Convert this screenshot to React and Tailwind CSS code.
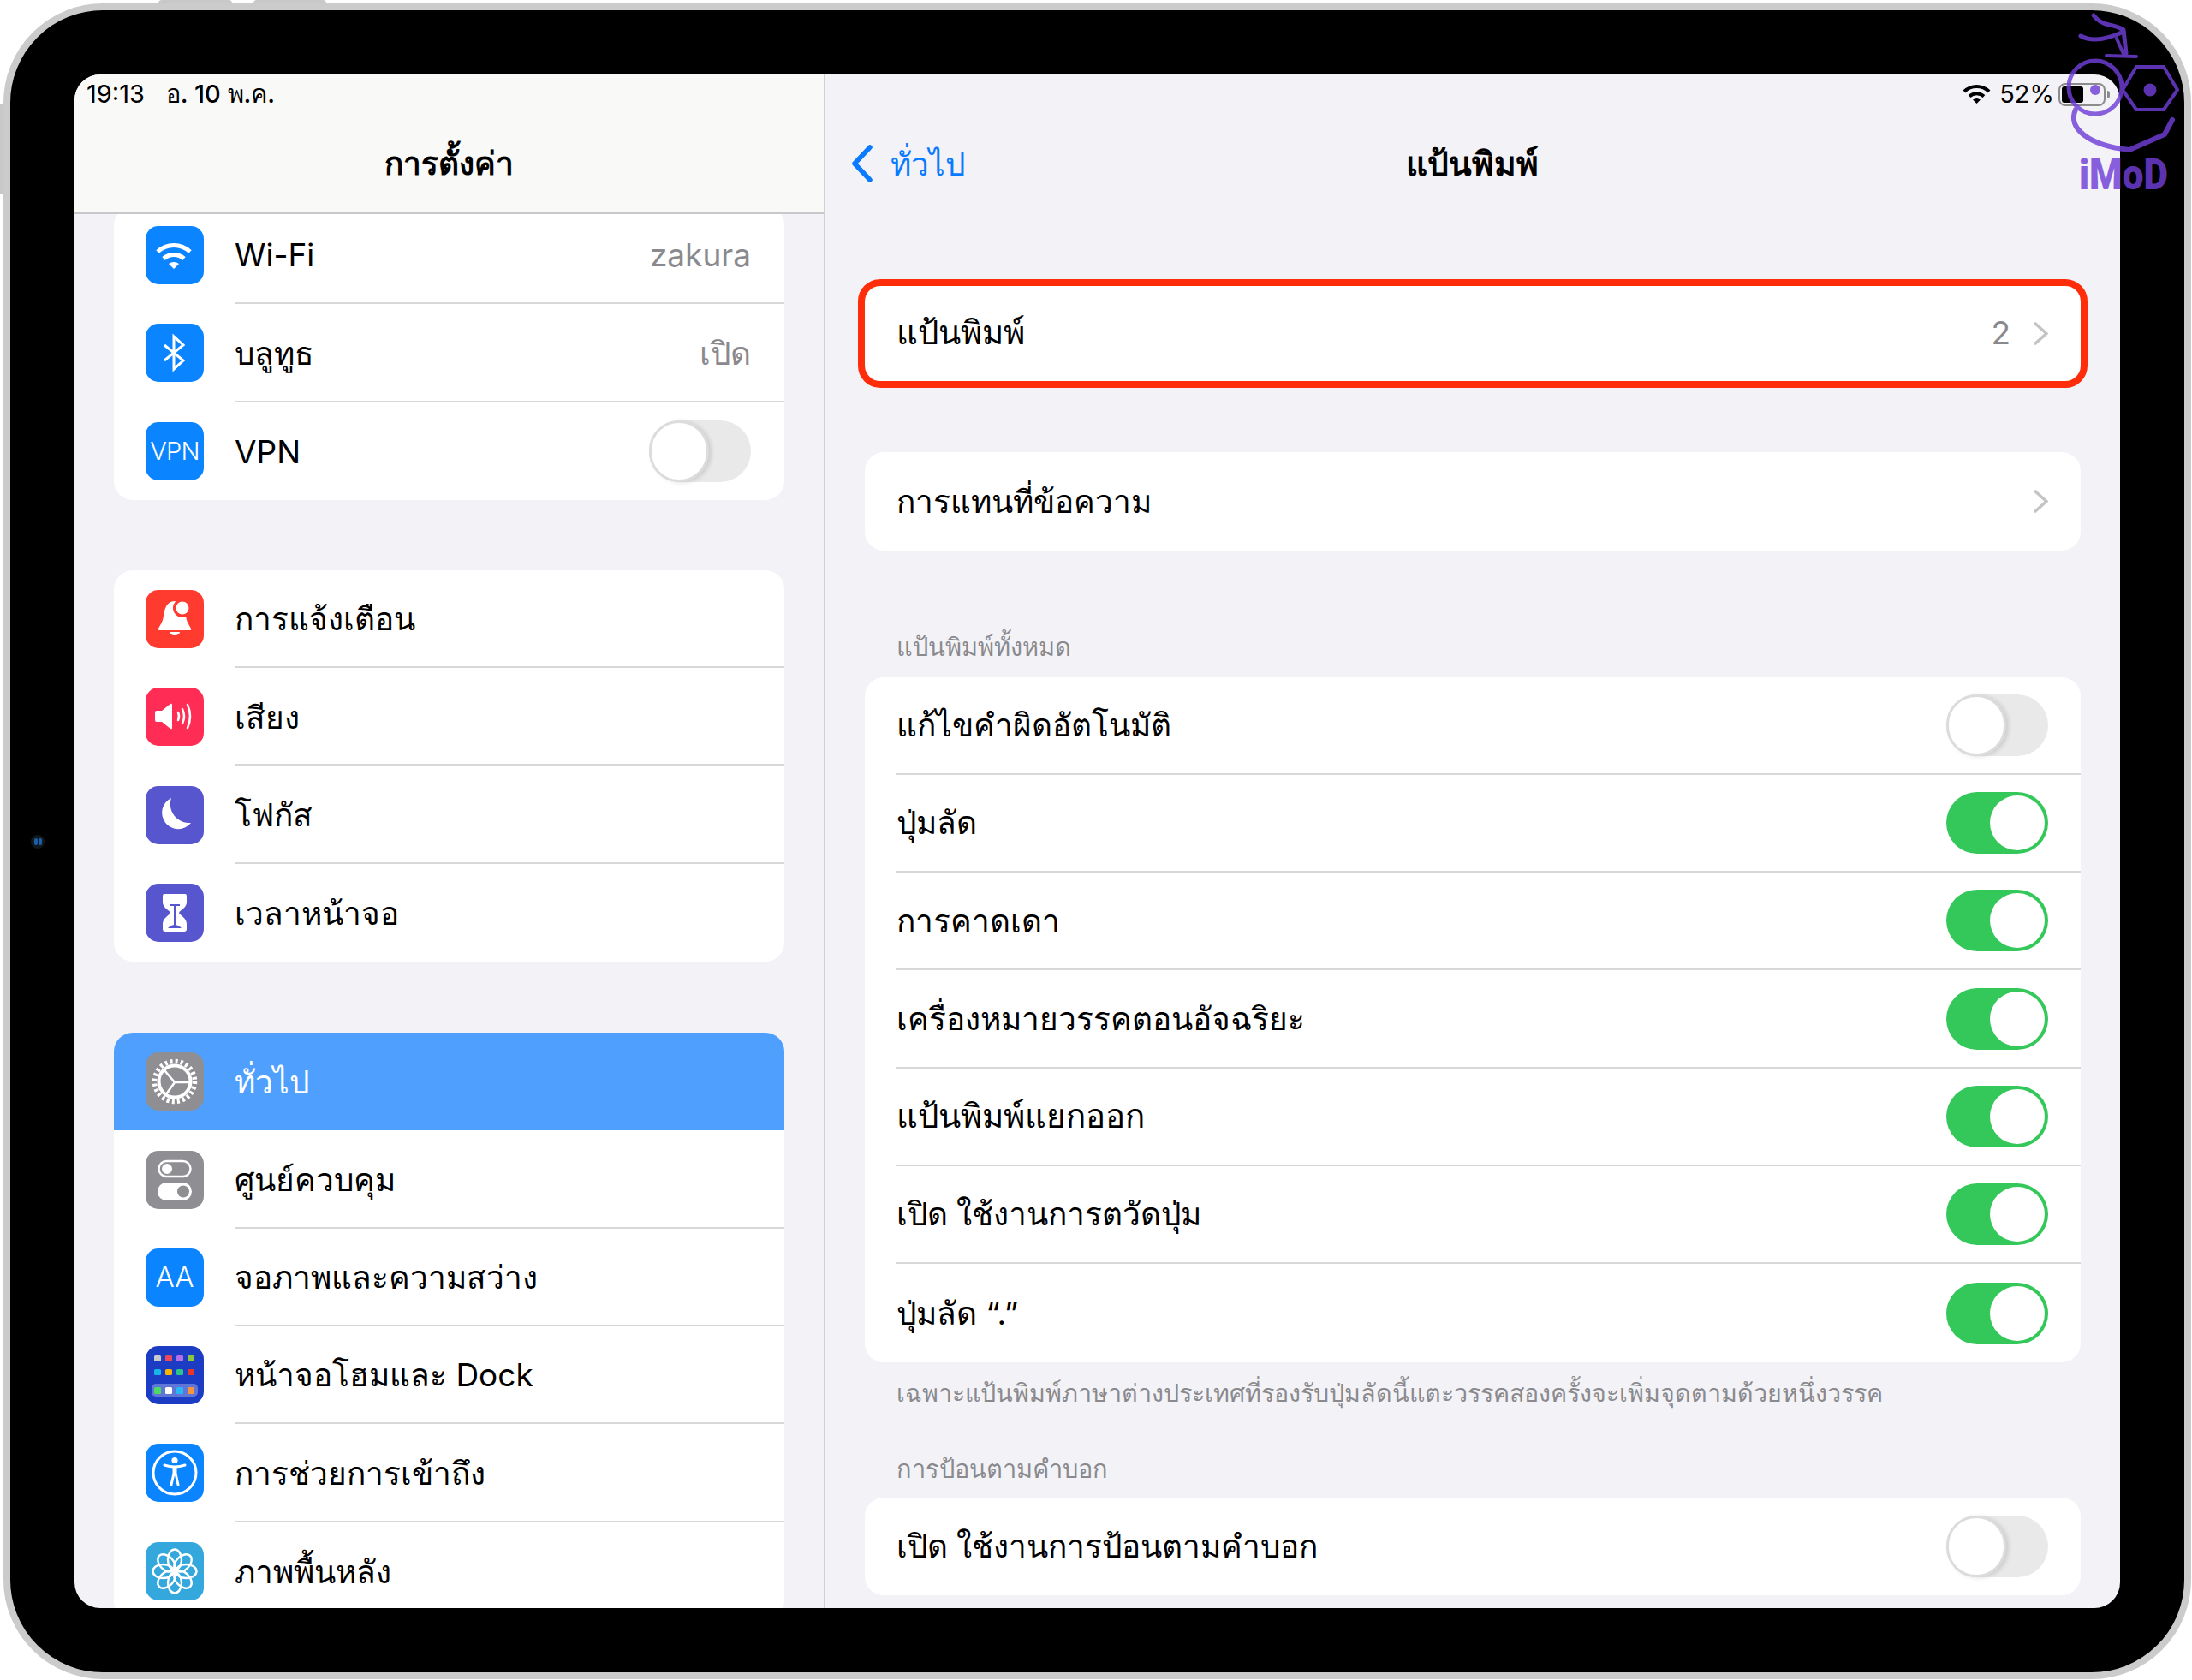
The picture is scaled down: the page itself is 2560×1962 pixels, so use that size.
import { Fragment } from "react";

function WifiTile() {
  return (
    <svg viewBox="0 0 68 68" className="h-full w-full" fill="none" stroke="white" strokeWidth="5">
      <path d="M14 30C25 20 41 20 52 30" />
      <path d="M21 38C28 32 38 32 45 38" />
      <path d="M33 50L27 44Q33 40 39 44Z" fill="white" stroke="none" />
    </svg>
  );
}

function BluetoothTile() {
  return (
    <svg viewBox="0 0 68 68" className="h-full w-full" fill="none" stroke="white" strokeWidth="3">
      <path d="M22 25L44 43L33 53V15L44 25L22 43" />
    </svg>
  );
}

function BellTile() {
  return (
    <svg viewBox="0 0 68 68" className="h-full w-full">
      <path fill="white" d="M34 13C25 13 22 22 21 30C20 38 17 41 15 45Q14 47 17 47H51Q54 47 53 45C51 41 48 38 47 30C46 22 43 13 34 13Z" />
      <path fill="white" d="M28 49H40A6 4 0 0 1 28 49Z" />
      <circle cx="43" cy="21" r="11" fill="#ff3b30" />
      <circle cx="43" cy="21" r="7.5" fill="white" />
    </svg>
  );
}

function SoundTile() {
  return (
    <svg viewBox="0 0 68 68" className="h-full w-full" fill="none" stroke="white" strokeWidth="2.5" strokeLinecap="round">
      <path fill="white" stroke="none" d="M13 27H19L29 19Q31 18 31 20V47Q31 49 29 48L19 40H13Q11 40 11 38V29Q11 27 13 27Z" />
      <path d="M38 29Q40 33.5 38 38" />
      <path d="M43 25Q47 33.5 43 42" />
      <path d="M49 20Q55 33.5 49 47" />
    </svg>
  );
}

function MoonTile() {
  return (
    <svg viewBox="0 0 68 68" className="h-full w-full">
      <path fill="white" d="M30 14A19 19 0 1 0 53 43A22 22 0 0 1 30 14Z" />
    </svg>
  );
}

function HourglassTile() {
  return (
    <svg viewBox="0 0 68 68" className="h-full w-full">
      <path fill="white" d="M22 12H46Q48 12 48 14V22C48 28 40 31 39 34C40 37 48 40 48 47V53Q48 56 45 56H23Q20 56 20 53V47C20 40 28 37 29 34C28 31 20 28 20 22V14Q20 12 22 12Z" />
      <rect x="28" y="24" width="12" height="2" fill="#5856cf" />
      <rect x="33" y="25" width="2" height="24" fill="#5856cf" />
      <path fill="#5856cf" d="M26 52Q34 44 42 52Z" />
    </svg>
  );
}

function GearTile() {
  return (
    <svg viewBox="0 0 68 68" className="h-full w-full" fill="none" stroke="white">
      <circle cx="34" cy="34" r="23.5" strokeWidth="5.5" strokeDasharray="3 3.15" />
      <circle cx="34" cy="34" r="18.5" strokeWidth="4" />
      <path d="M34 35L22 21M34 35H52M34 35L24 49" strokeWidth="2.6" />
    </svg>
  );
}

function ControlsTile() {
  return (
    <svg viewBox="0 0 68 68" className="h-full w-full">
      <rect x="15.5" y="12" width="37" height="18" rx="9" fill="none" stroke="white" strokeWidth="2.5" />
      <circle cx="25" cy="21" r="6" fill="white" />
      <rect x="14" y="37" width="40" height="21" rx="10.5" fill="white" />
      <circle cx="44" cy="47.5" r="7" fill="#8e8e93" />
    </svg>
  );
}

function HomeTile() {
  const rows = [
    { y: 11, colors: ["#c9c9cc", "#f0485b", "#b36ee8", "#8cc63f"] },
    { y: 27, colors: ["#19b5e8", "#f7b500", "#2bc48a", "#e8352b"] },
  ];
  const xs = [10, 23, 36, 49];
  return (
    <svg viewBox="0 0 68 68" className="h-full w-full">
      {rows.map((r) =>
        r.colors.map((c, i) => <rect key={c} x={xs[i]} y={r.y} width="8" height="7" rx="1.5" fill={c} />)
      )}
      <rect x="7" y="44" width="54" height="15" rx="5" fill="white" fillOpacity="0.3" />
      {["#4cd964", "#ffffff", "#29b6f6", "#f7943e"].map((c, i) => (
        <rect key={c} x={xs[i]} y="48" width="8" height="8" rx="1.5" fill={c} />
      ))}
    </svg>
  );
}

function AccessTile() {
  return (
    <svg viewBox="0 0 68 68" className="h-full w-full" fill="none" stroke="white" strokeWidth="3" strokeLinecap="round" strokeLinejoin="round">
      <circle cx="34" cy="34" r="25" />
      <circle cx="34" cy="19.5" r="3.6" fill="white" stroke="none" />
      <path d="M22 25Q34 29 46 25" />
      <path d="M34 27V37" strokeWidth="5" strokeLinecap="butt" />
      <path d="M32.5 37L30 48M35.5 37L38 48" />
    </svg>
  );
}

function FlowerTile() {
  const angles = [0, 45, 90, 135, 180, 225, 270, 315];
  return (
    <svg viewBox="0 0 68 68" className="h-full w-full" fill="none" stroke="white" strokeWidth="2.4">
      {angles.map((a) => (
        <ellipse key={a} cx="34" cy="20.5" rx="8" ry="12" transform={`rotate(${a} 34 34)`} />
      ))}
    </svg>
  );
}

function Tile({ bg, children }) {
  return <span className={`flex h-[68px] w-[68px] shrink-0 items-center justify-center overflow-hidden rounded-[15px] ${bg}`}>{children}</span>;
}

function Toggle({ on }) {
  if (on) {
    return (
      <span className="flex h-[72px] w-[119px] items-center justify-end rounded-full bg-[#34c759] pr-[4px]">
        <span className="h-[64px] w-[64px] rounded-full bg-white" />
      </span>
    );
  }
  return (
    <span className="flex h-[72px] w-[119px] items-center rounded-full bg-[#e9e9ea]">
      <span className="h-[72px] w-[70px] rounded-full border-[3px] border-[#dcdcdc] bg-white shadow-[3px_1px_5px_rgba(0,0,0,0.12)]" />
    </span>
  );
}

function Chevron() {
  return (
    <svg viewBox="0 0 18 29" className="h-[29px] w-[18px]" fill="none" stroke="#c4c4c7" strokeWidth="3.5">
      <path d="M2 2L16 14.5L2 27" />
    </svg>
  );
}

function SideRow({ tile, tileBg, label, value, toggle, active, last }) {
  return (
    <div className={`flex h-[114.3px] items-center pl-[37px] ${active ? "bg-[#4f9fff] text-white" : ""}`}>
      <Tile bg={tileBg}>{tile}</Tile>
      <div className={`ml-[36px] flex h-full flex-1 items-center justify-between pr-[39px] ${last || active ? "" : "border-b-2 border-[#d8d8da]"}`}>
        <span className="pt-[2px]">{label}</span>
        {value && <span className="pt-[2px] text-[#8a8a8e]">{value}</span>}
        {toggle && <Toggle />}
      </div>
    </div>
  );
}

function Row({ label, on, last, right, big }) {
  return (
    <div className="flex h-[114.3px] items-center pl-[37px]">
      <div className={`flex h-full flex-1 items-center justify-between pr-[38px] ${last ? "" : "border-b-2 border-[#d8d8da]"}`}>
        <span className={big ? "text-[38.5px]" : ""}>{label}</span>
        {right}
        {on !== undefined && <Toggle on={on} />}
      </div>
    </div>
  );
}

const group1 = [
  { tile: <WifiTile />, tileBg: "bg-[#0a84ff]", label: "Wi-Fi", value: "zakura" },
  { tile: <BluetoothTile />, tileBg: "bg-[#0a84ff]", label: "บลูทูธ", value: "เปิด" },
  { tile: <span className="text-[29px] font-light tracking-tight text-white">VPN</span>, tileBg: "bg-[#0a84ff]", label: "VPN", toggle: true, last: true },
];

const group2 = [
  { tile: <BellTile />, tileBg: "bg-[#ff3b30]", label: "การแจ้งเตือน" },
  { tile: <SoundTile />, tileBg: "bg-[#ff2d55]", label: "เสียง" },
  { tile: <MoonTile />, tileBg: "bg-[#5856cf]", label: "โฟกัส" },
  { tile: <HourglassTile />, tileBg: "bg-[#5856cf]", label: "เวลาหน้าจอ", last: true },
];

const group3 = [
  { tile: <GearTile />, tileBg: "bg-[#8e8e93]", label: "ทั่วไป", active: true },
  { tile: <ControlsTile />, tileBg: "bg-[#8e8e93]", label: "ศูนย์ควบคุม" },
  { tile: <span className="text-[33px] font-light text-white">AA</span>, tileBg: "bg-[#0a84ff]", label: "จอภาพและความสว่าง" },
  { tile: <HomeTile />, tileBg: "bg-[#1c3cc4]", label: "หน้าจอโฮมและ Dock" },
  { tile: <AccessTile />, tileBg: "bg-[#0a84ff]", label: "การช่วยการเข้าถึง" },
  { tile: <FlowerTile />, tileBg: "bg-[#34a8dc]", label: "ภาพพื้นหลัง", last: true },
];

const keyboardRows = [
  { label: "แก้ไขคำผิดอัตโนมัติ", on: false },
  { label: "ปุ่มลัด", on: true },
  { label: "การคาดเดา", on: true },
  { label: "เครื่องหมายวรรคตอนอัจฉริยะ", on: true },
  { label: "แป้นพิมพ์แยกออก", on: true, big: true },
  { label: "เปิด ใช้งานการตวัดปุ่ม", on: true },
  { label: "ปุ่มลัด “.”", on: true, last: true },
];

function Sidebar() {
  return (
    <div className="flex w-[876px] shrink-0 flex-col border-r border-[#d0d0d4]">
      <div className="h-[163px] shrink-0 border-b-2 border-[#c8c8cc] bg-[#f9f9f7]">
        <div className="flex h-[46px] items-center gap-[25px] pl-[14px] text-[29px]">
          <span>19:13</span>
          <span className="font-medium">อ. 10 พ.ค.</span>
        </div>
        <div className="mt-[33px] text-center font-semibold leading-[50px]">การตั้งค่า</div>
      </div>
      <div className="flex-1 overflow-hidden px-[46px]">
        <div className="-mt-[9px] overflow-hidden rounded-[22px] bg-white">
          {group1.map((r) => <SideRow key={r.label} {...r} />)}
        </div>
        <div className="mt-[82px] overflow-hidden rounded-[22px] bg-white">
          {group2.map((r) => <SideRow key={r.label} {...r} />)}
        </div>
        <div className="mt-[83px] overflow-hidden rounded-[22px] bg-white">
          {group3.map((r) => <SideRow key={r.label} {...r} />)}
        </div>
      </div>
    </div>
  );
}

function Detail() {
  return (
    <div className="flex min-w-0 flex-1 flex-col">
      <div className="flex h-[46px] items-center justify-end gap-[10px] pr-[12px] text-[29px]">
        <svg viewBox="0 0 33 24" className="h-[24px] w-[33px]" fill="none" stroke="black" strokeWidth="4">
          <path d="M2 9C10 1 23 1 31 9" />
          <path d="M8 14.5C13 10 20 10 25 14.5" />
          <path d="M16.5 23L12 18.5Q16.5 15.5 21 18.5Z" fill="black" stroke="none" />
        </svg>
        <span>52%</span>
        <span className="-ml-[5px] flex items-center">
          <span className="flex h-[27px] w-[55px] items-center rounded-[8px] border-2 border-[#8c8c8c] p-[2px]">
            <span className="h-full w-[25px] rounded-[3px] bg-black" />
          </span>
          <span className="ml-[2px] h-[9px] w-[3px] rounded-r-full bg-[#8c8c8c]" />
        </span>
      </div>
      <div className="mt-[29px] grid h-[50px] grid-cols-3 items-center">
        <div className="flex items-center pl-[31px] text-[#0a7aff]">
          <svg viewBox="0 0 26 44" className="h-[44px] w-[26px]" fill="none" stroke="#0a7aff" strokeWidth="5.5" strokeLinecap="round" strokeLinejoin="round">
            <path d="M22 3L4 22L22 41" />
          </svg>
          <span className="ml-[20px]">ทั่วไป</span>
        </div>
        <div className="text-center text-[39px] font-semibold">แป้นพิมพ์</div>
      </div>
      <div className="flex-1 overflow-hidden pl-[47px] pr-[46px] pt-[120px]">
        <div className="relative rounded-[22px] bg-white">
          <Row label="แป้นพิมพ์" big last right={
            <span className="flex items-center gap-[26px] text-[#8a8a8e]">2<Chevron /></span>
          } />
          <div className="absolute -inset-x-[8px] -bottom-[7px] -top-[6px] rounded-[26px] border-[8px] border-[#ff2d0a]" />
        </div>
        <div className="mt-[82px] rounded-[22px] bg-white">
          <Row label="การแทนที่ข้อความ" last right={<Chevron />} />
        </div>
        <div className="mb-[15px] ml-[37px] mt-[93px] text-[29px] leading-[40px] text-[#8a8a8e]">แป้นพิมพ์ทั้งหมด</div>
        <div className="rounded-[22px] bg-white">
          {keyboardRows.map((r) => (
            <Fragment key={r.label}>
              <Row {...r} />
            </Fragment>
          ))}
        </div>
        <div className="ml-[37px] mt-[16px] text-[28.65px] leading-[40px] text-[#8a8a8e]">เฉพาะแป้นพิมพ์ภาษาต่างประเทศที่รองรับปุ่มลัดนี้แตะวรรคสองครั้งจะเพิ่มจุดตามด้วยหนึ่งวรรค</div>
        <div className="mb-[13px] ml-[37px] mt-[49px] text-[29px] leading-[40px] text-[#8a8a8e]">การป้อนตามคำบอก</div>
        <div className="rounded-[22px] bg-white">
          <Row label="เปิด ใช้งานการป้อนตามคำบอก" on={false} last />
        </div>
      </div>
    </div>
  );
}

// iMoD watermark sits over the corner of the tablet
function Watermark() {
  return (
    <div className="absolute left-[2410px] top-0 h-[230px] w-[140px] text-[#703ed7] opacity-[0.82]">
      <svg viewBox="2410 0 140 180" className="h-[180px] w-[140px]" fill="none" stroke="currentColor" strokeWidth="4" strokeLinecap="round">
        <path strokeWidth="5" d="M2445 18Q2452 27 2463 29T2480 35L2483 62" />
        <path strokeWidth="5" d="M2430 42Q2448 52 2480 37" />
        <path d="M2472 45L2480 63" />
        <path d="M2460 65L2495 66" />
        <circle cx="2447" cy="102" r="31" strokeWidth="5" />
        <circle cx="2447" cy="105" r="6" fill="currentColor" stroke="none" />
        <path strokeWidth="6" d="M2424 128C2414 150 2440 170 2487 175L2528 157L2537 140" />
        <path d="M2479 105L2495 78H2527L2543 105L2527 128H2495Z" strokeLinejoin="miter" />
        <circle cx="2511" cy="105" r="7.5" fill="currentColor" stroke="none" />
      </svg>
      <div className="absolute left-[18px] top-[176px] origin-left scale-x-[0.88] font-['Roboto',sans-serif] text-[50px] font-black leading-[56px]">iMoD</div>
    </div>
  );
}

export default function App() {
  return (
    <div className="relative h-[1962px] w-[2560px] overflow-hidden bg-white font-['Inter','Noto_Sans',sans-serif] text-[37px] text-black">
      <div className="absolute left-[185px] top-0 h-[4px] w-[86px] rounded-t-sm bg-[#c8c8c8]" />
      <div className="absolute left-[296px] top-0 h-[4px] w-[85px] rounded-t-sm bg-[#c8c8c8]" />
      <div className="absolute left-0 top-[122px] h-[104px] w-[4px] bg-[#c8c8c8]" />

      <div className="ml-[4px] mt-[4px] h-[1957px] w-[2555px] rounded-[116px] border-[8px] border-[#cbcbcb] bg-black p-[75px]">
        <div className="flex h-full overflow-hidden rounded-[30px] bg-[#f2f2f7]">
          <Sidebar />
          <Detail />
        </div>
      </div>

      <div className="absolute left-[36px] top-[975px] flex h-[16px] w-[16px] items-center justify-center gap-[1px] rounded-full bg-[#101820]">
        <span className="h-[8px] w-[4px] rounded-full bg-[#1d5fa8]" />
        <span className="h-[8px] w-[4px] rounded-full bg-[#1d5fa8]" />
      </div>

      <Watermark />
    </div>
  );
}
